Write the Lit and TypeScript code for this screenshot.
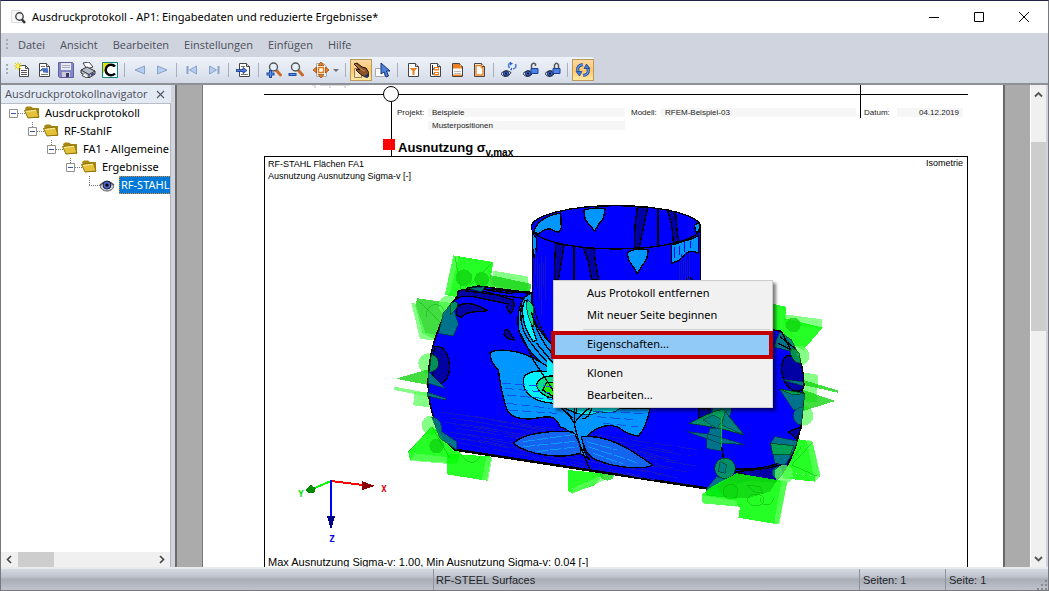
import { LitElement, html, svg, css, nothing } from "lit";
import type { TemplateResult, SVGTemplateResult } from "lit";
import { customElement, property, state } from "lit/decorators.js";
import { classMap } from "lit/directives/class-map.js";

const sheet = svg`<path d="M3.500 1.500h7l3 3v10h-10z" fill="#fff" stroke="#444"/><path d="M10.500 1.500v3h3" fill="#ddd" stroke="#444"/>`;
const eye = svg`<path d="M0 11.500Q4.500 6.500 10 10.500Q8 15 4 14.500Q1 14 0 11.500" fill="#dfe8fa" stroke="#234"/><circle cx="5" cy="11.500" r="2.600" fill="#3a66d8" stroke="#124"/><circle cx="5" cy="11.500" r="1" fill="#001"/>`;
const lens = svg`<path d="M10.500 8.500l4 4.500" stroke="#c86a2a" stroke-width="3" stroke-linecap="round"/><circle cx="7.500" cy="5" r="4" fill="#e4f0fc" stroke="#555" stroke-width="1.400"/>`;

const icons: Record<string, SVGTemplateResult> = {
  new: svg`<path d="M5.500 3.500h6l3 3v8h-9z" fill="#fff" stroke="#444"/><path d="M11.500 3.500v3h3M7 8.500h6M7 10.500h6M7 12.500h6" fill="none" stroke="#555"/><path d="M4 0v8M0 4h8M1 1l6 6M7 1l-6 6" stroke="#e3d200"/><circle cx="4" cy="4" r="1.500" fill="#fff36a"/>`,
  open: svg`${sheet}<path d="M5 4.500h4M5 12.500h7" stroke="#777"/><path d="M4 9Q6 5 10 7l1-1.500 1 5-5-.5 1.500-1.500Q6.500 8 4 9" fill="#4a7ae0" stroke="#1c3f94" stroke-width=".6"/>`,
  save: svg`<path d="M.5 .5h14l1 1v14H1.500l-1-1z" fill="#8486c8" stroke="#5e5f9c"/><path d="M3 1h10v7H3z" fill="#e9ebf2"/><path d="M4 3.500h8M4 5.500h8" stroke="#aab"/><path d="M4 10h8v5H4z" fill="#c9cad6"/><path d="M8 11h3v4H8z" fill="#3a3a70"/>`,
  print: svg`<path d="M3 1l6-1 4 5-6 2z" fill="#fff" stroke="#445"/><path d="M1 8l6-3 8 4v3l-6 4-8-5z" fill="#b9bfca" stroke="#333"/><path d="M1 8l8 4.500 6-3.500M9 12.500V16" fill="none" stroke="#333"/><path d="M4 11.500l-2 2 5 2.500 1-1.500" fill="#fff" stroke="#445"/><path d="M11 13l3-1.700" stroke="#33a" stroke-width="1.500"/>`,
  logo: svg`<path d="M.5 .5h15v15H.5z" fill="#fff" stroke="#088484"/><path d="M1 1h7L1 12z" fill="#eedc12"/><path d="M13 4.500A5.300 5.300 0 1 0 13 11.500" fill="none" stroke="#000" stroke-width="2.500"/>`,
  prev: svg`<path d="M12.500 4v8L3 8z" fill="#b5cdf2" stroke="#8aa1c9"/>`,
  next: svg`<path d="M3.500 4v8l9.500-4z" fill="#b5cdf2" stroke="#8aa1c9"/>`,
  first: svg`<path d="M3.500 4v8" stroke="#8aa1c9" stroke-width="2"/><path d="M12.500 4v8L5.500 8z" fill="#b5cdf2" stroke="#8aa1c9"/>`,
  last: svg`<path d="M12.500 4v8" stroke="#8aa1c9" stroke-width="2"/><path d="M3.500 4v8l7-4z" fill="#b5cdf2" stroke="#8aa1c9"/>`,
  goto: svg`${sheet}<path d="M5 4.500h4M5 12.500h7" stroke="#777"/><path d="M0 7.500h7V5.500l4 3-4 3v-2H0z" fill="#4a7ae0" stroke="#173a86" stroke-width=".8"/>`,
  zoomin: svg`${lens}<path d="M4.500 8v8M.5 12h8" stroke="#1c4a9e" stroke-width="3"/><path d="M4.500 9v6M1.500 12h6" stroke="#5f93ee"/>`,
  zoomout: svg`${lens}<path d="M.5 12.500h8" stroke="#1c4a9e" stroke-width="3"/><path d="M1.500 12.500h6" stroke="#5f93ee"/>`,
  fit: svg`<path d="M3.500 1.500h7l3 3v10h-10z" fill="#fff" stroke="#aaa"/><path d="M8 0l3 3.500H5zM8 16l3-3.500H5zM0 8l3.500-3v6zM16 8l-3.500-3v6z" fill="#f08020" stroke="#8a4208" stroke-width=".7"/><path d="M5.500 5.500h5v5h-5z" fill="#fff" stroke="#e57a1c" stroke-width="1.500"/>`,
  hand: svg`<path d="M1.500 6.500h7v9h-7z" fill="#f8e3b4" stroke="#98805a"/><path d="M1 2l3-1 5 4 4 1 3 5-1 4-5-1-4-3-3-3 1-1 3 1z" fill="#8b5428" stroke="#26150a"/><path d="M2 2l7 6 3 1" fill="none" stroke="#c58d55"/><path d="M11 15l4-4 1 3-2 2z" fill="#1f2f69"/>`,
  select: svg`<path d="M.5 6.500h9v8h-9z" fill="#fff" stroke="#aaa"/><path d="M6 1v11l3-2 2 5 2.500-1-2-5H15z" fill="#4d7fe0" stroke="#18366f"/>`,
  filter: svg`${sheet}<path d="M4.500 6h8L9.500 9v4h-2V9z" fill="#ee8222"/>`,
  tree: svg`${sheet}<path d="M5.500 3v9.500M5.500 7h2M5.500 12h2" stroke="#222"/><path d="M7 5h5v3.500H7zM7 10h5v3.500H7z" fill="#ee8222"/><path d="M8 6.500h3M8 11.500h3" stroke="#fff"/>`,
  head: svg`${sheet}<path d="M4 2h6l3 3v1.500H4z" fill="#ee8222"/><path d="M5 9.500h7M5 11.500h7" stroke="#bbb"/><path d="M4 12.500h9v1.500H4z" fill="#ee8222"/>`,
  frame: svg`${sheet}<path d="M5 3.500h5.500v2h1.500v7.500H5z" fill="#fff" stroke="#ee8222" stroke-width="1.400"/>`,
  eyesync: svg`${eye}<path d="M8.500 6Q6 2 10 .8M12 7Q16 6 14.500 2" fill="none" stroke="#4b7fd8" stroke-width="1.600"/><path d="M9 0l3 1.500-3 2zM11 8.500V5.500l-2 2" fill="#285fc0"/>`,
  eyeopen: svg`${eye}<path d="M8 6.500h7v5H8z" fill="#4d83e6" stroke="#1c3f94"/><path d="M8.500 6V3q1.500-3 4-1v2" fill="none" stroke="#555" stroke-width="1.500"/>`,
  eyelock: svg`${eye}<path d="M8 6.500h7v5H8z" fill="#4d83e6" stroke="#1c3f94"/><path d="M9.500 6V3q2-3.500 4 0v3" fill="none" stroke="#555" stroke-width="1.500"/>`,
  refresh: svg`<path d="M3.500 10.500Q1 4.500 6 3L8 2.700M12.500 5.500Q15 11.500 10 13L8 13.300" fill="none" stroke="#173f8c" stroke-width="3"/><path d="M3.500 10.500Q1 4.500 6 3L8 2.700M12.500 5.500Q15 11.500 10 13L8 13.300" fill="none" stroke="#5c97f0" stroke-width="1.500"/><path d="M1 9.500h6L4.500 14zM15 6.500H9L11.500 2z" fill="#3c78dc" stroke="#173f8c" stroke-width=".7"/>`,
};

type Tool = { icon: string; label: string; on?: boolean; menu?: boolean };
const groups: Tool[][] = [
  [
    { icon: "new", label: "Neu" },
    { icon: "open", label: "Öffnen" },
    { icon: "save", label: "Speichern" },
    { icon: "print", label: "Drucken" },
    { icon: "logo", label: "Sprache" },
  ],
  [{ icon: "prev", label: "Zurück" }, { icon: "next", label: "Vor" }],
  [{ icon: "first", label: "Erste Seite" }, { icon: "last", label: "Letzte Seite" }],
  [{ icon: "goto", label: "Gehe zu Seite" }],
  [
    { icon: "zoomin", label: "Vergrößern" },
    { icon: "zoomout", label: "Verkleinern" },
    { icon: "fit", label: "Anpassen", menu: true },
  ],
  [{ icon: "hand", label: "Verschieben", on: true }, { icon: "select", label: "Auswählen" }],
  [
    { icon: "filter", label: "Selektion" },
    { icon: "tree", label: "Gliederung" },
    { icon: "head", label: "Kopfzeile" },
    { icon: "frame", label: "Deckblatt" },
  ],
  [
    { icon: "eyesync", label: "Ansicht aktualisieren" },
    { icon: "eyeopen", label: "Ansicht entsperren" },
    { icon: "eyelock", label: "Ansicht sperren" },
  ],
  [{ icon: "refresh", label: "Aktualisieren", on: true }],
];

const glyph = (body: SVGTemplateResult, w = 16, h = 16) =>
  html`<svg width=${w} height=${h} viewBox="0 0 ${w} ${h}" aria-hidden="true">${body}</svg>`;

@customElement("tool-bar")
export class ToolBar extends LitElement {
  static styles = css`
    :host { display: flex; background: #d0d4de; }
    .strip { display: flex; align-items: center; height: 26px; padding-left: 3px; border-radius: 0 3px 3px 0; background: linear-gradient(#eef2f9, #e0e6f0 60%, #d3dae6); }
    .grip { width: 7px; }
    svg { display: block; }
    .sep { width: 1px; height: 14px; margin: 0 4px 0 3px; background: #a9afbb; }
    button { display: flex; align-items: center; justify-content: center; box-sizing: border-box; width: 22px; height: 22px; padding: 0; border: 1px solid transparent; background: none; }
    .on { border-color: #b99a5c; background: linear-gradient(#fbd9a2, #ffc86b 50%, #ffe9a0); }
    .wide { width: 35px; gap: 4px; padding-left: 2px; }
  `;
  render() {
    return html`<div class="strip" role="toolbar" aria-label="Werkzeuge">
      <svg class="grip" width="7" height="14"><path d="M3 1v12" stroke="#a4abb8" stroke-width="2" stroke-dasharray="2 2" /></svg>
      ${groups.map((g, i) => html`${i ? html`<span class="sep"></span>` : nothing}${g.map(
        (t) => html`<button aria-label=${t.label} class=${classMap({ on: !!t.on, wide: !!t.menu })}>
          ${glyph(icons[t.icon])}${t.menu ? glyph(svg`<path d="M0 0h6L3 3z" fill="#6c6f76"/>`, 6, 3) : nothing}
        </button>`
      )}`)}
    </div>`;
  }
}

type Node = { label: string; leaf?: boolean; children?: Node[] };
const tree: Node = {
  label: "Ausdruckprotokoll",
  children: [{ label: "RF-StahlF", children: [{ label: "FA1 - Allgemeine", children: [{ label: "Ergebnisse", children: [{ label: "RF-STAHL", leaf: true }] }] }] }],
};

@customElement("nav-tree")
export class NavTree extends LitElement {
  static styles = css`
    :host { display: flex; flex-direction: column; min-width: 0; font: 11px/18px "Open Sans", sans-serif; }
    header { display: flex; align-items: center; justify-content: space-between; height: 18px; padding: 0 6px 0 4px; background: #e4eaf4; color: #4b4e58; line-height: 16px; }
    h2 { margin: 0; font: inherit; white-space: nowrap; }
    button { display: flex; align-items: center; justify-content: center; padding: 0; border: 0; background: none; }
    .box { flex: 1; min-height: 0; display: flex; flex-direction: column; overflow: hidden; border-top: 1px solid #b9bdc6; border-right: 1px solid #b0b4bd; background: #fff; }
    .scroll { flex: 1; overflow: hidden; }
    ul { list-style: none; margin: 0; padding: 0 0 0 19px; }
    .root { padding: 0 0 0 6px; }
    .row { display: flex; height: 18px; white-space: nowrap; font-family: "Noto Sans", sans-serif; color: #000; }
    .row svg { flex: none; }
    .row span { padding: 0 2px; }
    .sel { background: #0078d7; color: #fff; outline: 1px dotted #e08a30; outline-offset: -1px; }
    .bar { display: grid; grid-template-columns: 17px 36px 1fr 17px; height: 15px; background: #f0f0f0; }
    .thumb { background: #cdcdcd; }
  `;
  private item(n: Node, depth = 0): TemplateResult {
    return html`<li>
      <div class="row">
        ${glyph(
          svg`${depth ? svg`<path d="M6.500 ${n.leaf ? 0 : -2}V${n.leaf ? 10 : 5}" stroke="#777" stroke-dasharray="1 1"/>` : nothing}
          <path d="M${n.leaf ? 6 : 11} 9.500H18" stroke="#777" stroke-dasharray="1 1"/>
          ${n.leaf
            ? svg`<ellipse cx="24" cy="10.500" rx="6.500" ry="4.500" fill="#cfd5e4" stroke="#555"/><path d="M17 9Q24 2 31 9" fill="none" stroke="#555" stroke-width="1.300"/><circle cx="24" cy="9" r="4" fill="#4b62c4" stroke="#223"/><circle cx="24" cy="9" r="1.600" fill="#000"/>`
            : svg`<path d="M2.500 5.500h8v8h-8z" fill="#fff" stroke="#919191"/><path d="M4 9.500h5" stroke="#3a55a8"/>
              <path d="M18 4l2-1.500h4l2 1.500h6v10H21z" fill="#a8870f"/><path d="M17.500 6.500l12-1.500 2.500 8-11 1z" fill="#e3c23a" stroke="#8f7412"/><path d="M19 7.500l10-1.200" stroke="#fbeb9a"/>`}`,
          36,
          18
        )}
        <span class=${classMap({ sel: !!n.leaf })}>${n.label}</span>
      </div>
      ${n.children ? html`<ul>${n.children.map((c) => this.item(c, depth + 1))}</ul>` : nothing}
    </li>`;
  }
  render() {
    return html`<header><h2>Ausdruckprotokollnavigator</h2>
        <button aria-label="Schließen">${glyph(svg`<path d="M1 1l7 7M8 1l-7 7" stroke="#555b66" stroke-width="1.200"/>`, 9, 9)}</button></header>
      <div class="box">
        <div class="scroll"><ul class="root">${this.item(tree)}</ul></div>
        <div class="bar">
          <button aria-label="Nach links">${glyph(svg`<path d="M6 1L2.500 4.500 6 8" fill="none" stroke="#444" stroke-width="1.600"/>`, 9, 9)}</button>
          <span class="thumb"></span><span></span>
          <button aria-label="Nach rechts">${glyph(svg`<path d="M3 1l3.500 3.500L3 8" fill="none" stroke="#444" stroke-width="1.600"/>`, 9, 9)}</button>
        </div>
      </div>`;
  }
}

@customElement("result-model")
export class ResultModel extends LitElement {
  static styles = css`
    :host { display: block; overflow: hidden; }
    svg { display: block; width: 100%; min-width: 702px; }
    .k { stroke: #000; stroke-width: 4; stroke-linejoin: round; }
    .t { stroke: #000; stroke-width: 2; }
    .n { fill: none; }
    .l { fill: #0096ff; } .d { fill: #0000a5; } .c { fill: #00f4ff; } .e { fill: #00e08c; }
    .g { fill: #00ff00; fill-opacity: 0.85; }
    .p { fill: #5cff5c; fill-opacity: 0.75; }
    .m { fill: #12d512; fill-opacity: 0.8; }
    .q { fill: #008080; fill-opacity: 0.9; stroke: #003838; stroke-width: 2; }
    .f { fill: #00a850; fill-opacity: 0.85; stroke: #003800; stroke-width: 2; }
    .o { fill: none; stroke: #00a000; stroke-width: 2; stroke-opacity: 0.6; }
    .ax { font: bold 9px "DejaVu Sans Mono", monospace; text-anchor: middle; }
  `;
  render() {
    const streaks = Array.from({ length: 16 }, (_, i) => svg`<path d="M${440 + (i * 17) % 40} ${412 + i * 2}L${700 - (i * 23) % 60} ${450 + i * 2}" stroke="#1414cc" stroke-dasharray="${20 + (i * 7) % 30} ${4 + i % 5}"/>`);
    const wall = Array.from({ length: 12 }, (_, i) => svg`<path d="M${535 + i * 2 + (i > 5 ? 132 : 0)} ${250 + (i * 7) % 15}V${275 + (i * 13) % 40}" stroke="#1414cc"/>`);
    return html`<svg viewBox="265 157 702 410" shape-rendering="crispEdges" role="img" aria-label="Ausnutzung der Flächen">
      <g transform="translate(390 240) scale(.33333)">
        <path class="g" d="M190 46L310 66L290 190L165 165Z"/><path class="p" d="M190 46L206 50L180 160L164 165Z"/><path class="o" d="M195 50L215 160L305 70"/>
        <circle class="m" cx="222" cy="113" r="25"/><circle class="m" cx="275" cy="118" r="22"/>
        <path class="p" d="M310 92L415 110L412 156L305 135Z"/><path class="m" d="M300 105L424 132L420 158L300 140Z"/>
        <path class="m" d="M82 175L205 192L185 240L138 300L98 280L76 198Z"/><path class="p" d="M64 190L76 190L106 278L136 285V302L90 296Z"/><circle class="p" cx="175" cy="196" r="29"/>
        <path class="o" d="M80 178L150 245M150 250a28 30 0 1 0-40-20"/>
        <circle class="p" cx="115" cy="370" r="30"/><path class="m" d="M18 416L115 388L165 445Z"/><path class="p" d="M12 440L165 468L170 480L12 450Z"/><path class="p" d="M72 455H120V502L70 496Z"/>
        <circle class="p" cx="124" cy="556" r="29"/><path class="g" d="M55 635L125 560L215 625L200 670L60 660Z"/><path class="p" d="M75 640L200 655L200 674L60 662Z"/>
        <path class="g" d="M170 640L305 650L290 722L170 703Z"/><path class="p" d="M290 650L306 655L294 722L276 720Z"/><circle class="m" cx="140" cy="618" r="22"/><path class="o" d="M55 635L125 560L180 655M205 630q40 70 70 10"/>
        <path class="g" d="M533 690L640 700L615 735L545 760L533 750Z"/><path class="p" d="M545 745L640 705L645 720L545 762Z"/><circle class="m" cx="652" cy="700" r="22"/>
      </g>
      <g transform="translate(670 285) scale(.33333)">
        <path class="g" d="M300 55L348 65L345 190H300Z"/><path class="p" d="M345 88L455 103L458 130L345 118Z"/><path class="g" d="M345 100L458 128L400 195L345 170Z"/>
        <circle class="m" cx="370" cy="120" r="22"/><circle class="p" cx="388" cy="212" r="30"/><circle class="p" cx="400" cy="392" r="30"/>
        <path class="p" d="M400 262L445 270L440 350H400Z"/><path class="m" d="M400 315L496 348L400 378Z"/><path class="m" d="M400 285L503 316V323L400 300Z"/>
        <path class="g" d="M340 455L428 470L450 575L340 560Z"/><path class="p" d="M410 463L428 470L452 574L436 590L430 570Z"/><path class="g" d="M340 560L436 574V590L340 580Z"/>
        <path class="o" d="M425 475L365 540L440 573M360 530l35-45"/>
      </g>
      <path d="M468 288L478 286L532 293L780 331C796 345 803 370 803 400C803 432 792 466 775 482L750 480L711 489L455 450C438 438 428 410 428 382C429 340 447 300 468 288Z" fill="#00f" stroke="#000" stroke-width="1.500"/>
      <path d="M457 450L711 489" stroke="#000" stroke-width="2.500"/>
      ${streaks}
      <path d="M532 228V300Q540 335 556 349H700V228Z" fill="#00f"/>
      <path d="M532 228V300Q540 335 556 349M700 228V300" fill="none" stroke="#000"/>
      <g transform="translate(390 240) scale(.33333)">
        <path class="d k" d="M205 152C260 140 300 160 370 180Q378 205 360 220Q345 200 355 192L250 170Q210 165 200 178Z"/>
        <path class="d k" d="M200 200C230 180 265 195 292 212C265 218 230 210 215 232L200 225Z"/>
        <path class="d k" d="M135 320C165 315 180 350 178 390C175 425 150 440 135 425Q118 390 135 320Z"/>
        <path class="d k" d="M345 270Q355 265 360 280L373 300Q355 300 342 285Z"/>
        <path class="k n" d="M225 152L410 176M235 144L420 156M300 142L320 150L420 160M290 150l70 10 20-4"/>
        <path class="l k" d="M424 160C395 165 378 215 386 270C400 320 450 370 490 400V318C455 285 432 250 424 215Z"/>
        <path class="c k" d="M405 180C390 210 398 260 430 305L440 300C425 260 415 230 412 185Z"/>
        <path class="e t" d="M412 178C405 215 420 250 432 262V200Z"/>
        <path class="k n" d="M395 190Q385 250 410 290T490 385M424 215Q440 290 490 345M440 310L490 370"/>
        <path class="l k" d="M300 338C320 325 370 330 410 345C445 360 475 380 500 400H600V500L680 504L780 505Q770 560 745 588Q720 585 700 572C680 555 640 545 598 582C570 610 580 640 600 660L570 640C560 600 545 570 510 560C495 520 470 530 430 536C390 540 360 530 352 510C335 470 330 420 325 390Q300 365 300 338Z"/>
        <path class="c k" d="M492 398C455 390 410 390 400 415C395 460 430 485 490 490L560 520V400Z"/><path class="c" d="M470 355L492 375V430L472 400Z"/>
        <path class="e k" d="M492 408Q450 405 438 435Q450 470 492 475Z"/><path d="M492 428H470L458 450L490 470Z" fill="#1bf000" class="k"/>
        <path class="k n" d="M392 280L430 360L492 455"/><path class="c t" d="M560 500L690 504Q670 525 630 515Q600 530 560 520Z"/>
        <path class="k n" d="M500 490C520 510 540 525 553 550C565 530 590 510 610 495M553 500V550C560 590 570 620 600 690M515 505l35 30M575 535q20 5 30-30"/>
        <path class="k" fill="#1464f0" d="M370 610C400 580 480 570 548 576Q572 600 572 640C520 655 420 650 370 610Z"/>
        <path class="k" fill="#1464f0" d="M574 590C630 585 680 605 720 630Q760 655 788 675C760 690 680 685 620 660C590 650 580 620 574 590Z"/>
        <path class="n" stroke="#0a9cff" stroke-width="3" stroke-dasharray="34 7" d="M400 605L560 582M400 620L565 603M440 635L565 620M590 605L680 630M595 620L740 668M610 640L700 672"/>
        <path class="n" stroke="#1550f0" stroke-width="3" stroke-dasharray="28 13" d="M335 430L500 440M345 445L480 458M350 465L510 480M352 490L480 505M355 510L500 520M610 515L760 520M620 530L745 540M640 550L745 560"/>
        <path class="q" d="M160 218L185 190L205 252L190 288L146 280Z"/><path class="f" d="M182 190Q210 175 200 205L180 225Z"/><path class="q" d="M235 145L285 140L275 155Z"/>
        <path class="f" d="M124 342Q150 350 144 380Q135 395 118 398Z"/><path class="q" d="M115 395L165 445L115 430ZM112 457L168 475V480L112 468Z"/><path class="q" d="M125 530Q160 540 155 575L200 605V630L150 595Z"/>
      </g>
      <g transform="translate(520 195) scale(.33333)">
        <ellipse class="k" fill="#00f" cx="288" cy="97" rx="254" ry="65"/>
        <path class="l k" d="M42 110C50 80 75 62 122 54L124 100C115 122 105 105 90 102C70 100 62 112 55 118Z"/>
        <path class="l k" d="M192 45Q225 35 255 42Q252 75 238 85L224 108L205 85Q192 75 192 45Z"/>
        <path class="d k" d="M352 36L383 38L372 90L358 157L343 157L345 90ZM442 44L467 52L470 95L476 140L460 142L455 90Z"/>
        <path class="k n" d="M414 40V152M162 152V256"/>
        <path class="l k" d="M523 92L536 80L540 100L530 115ZM38 115L50 130L48 170L43 188L38 160Z"/>
        <path class="d k" d="M107 146L133 148L125 195L115 255H103L104 200ZM190 158L222 160L226 200L236 255H215L205 200Z"/>
        <path class="l k" d="M322 172Q350 158 384 164Q385 190 366 212L352 236L340 215Q322 195 322 172Z"/>
        <path class="l k" d="M455 150L520 130L536 120V175C520 165 500 165 480 195L455 205Z"/>
        <path d="M465 155V190M480 152V180M495 142V170M512 138V160" stroke="#00f" stroke-width="3"/>
        <path class="k n" d="M497 254q10-12 20 0"/>
      </g>
      ${wall}
      <g transform="translate(670 285) scale(.33333)">
        <path class="q" d="M330 140L365 165L385 205L330 190L312 188L320 160Z"/><path class="k n" d="M335 142L400 265M330 155L375 190M325 175L385 205"/>
        <path class="d k" d="M350 212C330 225 330 270 350 300C370 325 400 325 402 300Q400 240 385 215Z"/>
        <path class="f" d="M360 195Q375 185 388 205L392 235Q365 235 360 195Z"/>
        <path class="q" d="M328 312L405 325L398 372L370 375ZM332 283L400 290V303Z"/><path class="f" d="M328 312L370 330L405 325Z"/>
        <path class="q" d="M400 365Q370 370 370 392Q370 415 394 420Z"/>
        <path class="d k" d="M355 440L395 425L380 462Z"/><path class="q" d="M302 475L315 455L382 468L370 500L345 540L315 535Z"/><path class="f" d="M302 475L372 482L360 510L308 508Z"/>
        <path class="d k" d="M85 370L120 372L118 400L85 398Z"/><circle class="q" cx="155" cy="375" r="29"/>
        <path class="f" d="M58 415L130 380L160 372L222 450L150 430Z"/><path class="q" d="M100 405L130 390L160 405L140 430ZM165 380L222 450L155 420Z"/>
        <path class="q" d="M52 440L120 448L222 478L150 475ZM110 465L120 430H155V498L110 490Z"/><path class="m" d="M152 400h4v95h-4z"/>
        <path class="k n" d="M155 485L165 550M195 552C250 555 300 545 325 535"/>
        <path class="d k" d="M195 560L240 556L290 550L330 540L340 545L320 588L240 575Z"/><circle class="q" cx="322" cy="563" r="16"/><circle class="p" cx="342" cy="568" r="28"/>
        <path class="q" d="M110 610L140 575L200 590V640L110 630Z"/><circle class="f" cx="165" cy="550" r="31"/><path class="q" d="M150 530l20 10-5 25-20-5z"/>
        <path class="g" d="M95 630L125 605L200 565L352 590L325 718L205 698L210 665L98 655Z"/><path class="p" d="M95 630L200 648V665L98 655ZM335 585L352 590L328 718L312 716Z"/>
        <path class="m" d="M140 605L200 565L320 588L300 620L230 640L160 635Z"/>
        <path class="o" d="M160 620a22 22 0 1 0 44 0a22 22 0 1 0-44 0M232 645a25 18 0 1 0 50 0a25 18 0 1 0-50 0M230 600l40 5 10 20-30-5zM270 640a20 20 0 1 0 40 0"/>
      </g>
      <path d="M331 481L310 490" stroke="#0f0" stroke-width="2"/><path d="M331 481L363 485" stroke="red" stroke-width="2"/><path d="M331 480V517" stroke="#00f" stroke-width="2"/>
      <path d="M305 490L311 485L316 488L314 493L308 493Z" fill="#008a00"/><path d="M362 481L375 486L362 490Z" fill="#8a0000"/><path d="M327 516H335L331 530Z" fill="#00008a"/>
      <text class="ax" x="301" y="497" fill="#00e000">Y</text><text class="ax" x="384" y="492" fill="#e00000">X</text><text class="ax" x="332" y="542" fill="#0000e0">Z</text>
    </svg>`;
  }
}

@customElement("report-page")
export class ReportPage extends LitElement {
  static styles = css`
    :host { display: flex; flex-direction: column; overflow: hidden; box-sizing: border-box; padding: 0 35px 0 61px; background: #fff; color: #000; font: 9px/12px "Liberation Sans", sans-serif; }
    .rule { height: 9px; border-bottom: 1px solid #000; padding-left: 48px; }
    .rule svg { display: block; }
    .head { position: relative; height: 61px; margin-left: 127px; border-left: 1px solid #000; }
    .dot, .mark { position: absolute; box-sizing: border-box; }
    .dot { left: -9px; top: -9px; width: 16px; height: 16px; border: 1px solid #000; border-radius: 50%; background: #fff; }
    .mark { left: -9px; top: 44px; width: 12px; height: 11px; background: #f00; }
    dl { display: grid; grid-template-columns: 31px 197px 6px 30px minmax(0, 1fr) 8px 33px 66px; row-gap: 4px; margin: 0; padding: 13px 5px 0; font-size: 8px; line-height: 9px; color: #222; }
    dt, dd { margin: 0; }
    dd { padding: 0 4px; background: #f6f6f6; }
    .m { grid-column: 4; } .date { grid-column: 7; } .r { text-align: right; } .second { grid-column: 2; }
    .bar { position: absolute; right: 107px; top: -10px; width: 1px; height: 33px; background: #000; }
    h1 { margin: 9px 0 0 6px; font-size: 13px; line-height: 17px; font-weight: bold; }
    sub { font-size: 10px; line-height: 1px; vertical-align: -4px; }
    .frame { flex: 1; min-height: 0; display: grid; grid-template: minmax(0, 1fr) / minmax(0, 1fr) auto; border: 1px solid #000; border-bottom: 0; }
    result-model { grid-area: 1 / 1 / 2 / 3; }
    p { margin: 0; }
    .cap { grid-area: 1 / 1; padding: 1px 3px; z-index: 1; }
    .view { grid-area: 1 / 2; padding: 0 4px; z-index: 1; }
    .foot { grid-area: 1 / 1; align-self: end; padding: 0 3px; font-size: 11px; line-height: 10px; z-index: 1; }
  `;
  render() {
    return html`<div class="rule"><svg width="48" height="6"><path d="M-4 0h8M8 0h30M2 2h2M17 2h2M32 2h2" stroke="#bbb" /></svg></div>
      <div class="head">
        <span class="dot"></span><span class="bar"></span>
        <dl>
          <dt>Projekt:</dt><dd>Beispiele</dd>
          <dt class="m">Modell:</dt><dd>RFEM-Beispiel-03</dd>
          <dt class="date">Datum:</dt><dd class="r">04.12.2019</dd>
          <dd class="second">Musterpositionen</dd>
        </dl>
        <span class="mark"></span>
        <h1>Ausnutzung σ<sub>v,max</sub></h1>
      </div>
      <div class="frame">
        <result-model></result-model>
        <div class="cap"><p>RF-STAHL Flächen FA1</p><p>Ausnutzung Ausnutzung Sigma-v [-]</p></div>
        <p class="view">Isometrie</p>
        <p class="foot">Max Ausnutzung Sigma-v: 1.00, Min Ausnutzung Sigma-v: 0.04 [-]</p>
      </div>`;
  }
}

@customElement("context-menu")
export class ContextMenu extends LitElement {
  @property({ attribute: false }) groups: string[][] = [];
  @property() active = "";
  static styles = css`
    :host { display: block; box-sizing: border-box; border: 1px solid #ccc; padding: 1px; background: #f1f1f1; box-shadow: 3px 3px 3px rgba(0, 0, 0, 0.5); font: 11px/22px "Noto Sans", sans-serif; }
    button { position: relative; display: block; width: 100%; height: 22px; padding: 0 0 0 32px; border: 0; background: none; text-align: left; font: inherit; color: #000; }
    .on { background: #91c9f7; }
    .on::after { content: ""; position: absolute; inset: -2px -2px -4px -4px; border: 4px solid #c00000; }
    hr { height: 1px; margin: 3px 1px 3px 28px; border: 0; background: #d0d0d0; }
  `;
  render() {
    return html`${this.groups.map((g, i) => html`${i ? html`<hr />` : nothing}${g.map(
      (l) => html`<button role="menuitem" class=${classMap({ on: l === this.active })}>${l}</button>`
    )}`)}`;
  }
}

@customElement("app-root")
export class AppRoot extends LitElement {
  @state() private menu = [["Aus Protokoll entfernen", "Mit neuer Seite beginnen"], ["Eigenschaften..."], ["Klonen", "Bearbeiten..."]];
  static styles = css`
    :host { position: relative; display: flex; flex-direction: column; box-sizing: border-box; height: 100vh; overflow: hidden; border: 1px solid #77797e; border-top-color: #23234a; background: #d0d4de; font-family: "Open Sans", sans-serif; }
    button { display: flex; align-items: center; justify-content: center; padding: 0; border: 0; background: none; font: inherit; color: inherit; }
    svg { display: block; }
    .title { display: flex; align-items: center; height: 32px; padding: 0 2px 0 10px; background: #fff; }
    h1 { flex: 1; margin: 0 0 0 5px; font: 11px/16px "Noto Sans", sans-serif; }
    .title button { width: 45px; height: 32px; }
    .menus { display: flex; align-items: center; gap: 15px; height: 24px; padding-left: 3px; font-size: 11px; line-height: 14px; color: #4b505b; }
    .menus button { padding-bottom: 1px; }
    .grip { margin-right: -8px; }
    .main { flex: 1; min-height: 0; display: grid; grid-template-columns: 170px minmax(0, 1fr) 18px; border-top: 2px solid #8d9097; }
    .view { display: flex; margin-left: 4px; padding: 0 25px; border-left: 2px solid #6b6b6b; background: #ababab; overflow: hidden; }
    report-page { flex: 1; min-width: 0; border-left: 1px solid #777; border-right: 2px solid #696969; }
    .scroll { display: grid; grid-template-rows: 18px 39px minmax(0, 189fr) minmax(0, 218fr) 18px; margin-right: 2px; border-left: 1px solid #fff; background: #f0f0f0; }
    .thumb { background: #cdcdcd; }
    .status { display: grid; grid-template-columns: 432px minmax(0, 1fr) 86px 103px; align-items: stretch; height: 21px; border-top: 2px solid #e8eaee; background: linear-gradient(#d5d9e1, #c0c4cc 35%, #a9adb6 50%, #bfc3cb); font: 11px/22px "Liberation Sans", sans-serif; color: #23252b; }
    .status span + span { border-left: 1px solid #8f939c; padding-left: 3px; }
    .status .name { padding-left: 2px; }
    .status .last { display: flex; justify-content: space-between; align-items: flex-end; }
  
    context-menu { position: absolute; left: 552px; top: 279px; width: 220px; }
  `;
  render() {
    return html`
      <div class="title">
        ${glyph(svg`<path d="M.5 1.500h8l3 3v9H.5z" fill="#f6f6f6" stroke="#ddd"/><path d="M10.500 10l3.500 4" stroke="#333" stroke-width="2.500"/><circle cx="8.500" cy="7.500" r="3.700" fill="#f3f6f9" stroke="#444" stroke-width="1.400"/>`)}
        <h1>Ausdruckprotokoll - AP1: Eingabedaten und reduzierte Ergebnisse*</h1>
        <button aria-label="Minimieren">${glyph(svg`<path d="M0 5.500h10" stroke="#000"/>`, 10, 10)}</button>
        <button aria-label="Maximieren">${glyph(svg`<path d="M.5 .5h9v9h-9z" fill="none" stroke="#000"/>`, 10, 10)}</button>
        <button aria-label="Fenster schließen">${glyph(svg`<path d="M0 0l10 10M10 0L0 10" stroke="#000"/>`, 10, 10)}</button>
      </div>
      <nav class="menus">
        <svg class="grip" width="7" height="14"><path d="M3 1v12" stroke="#a4abb8" stroke-width="2" stroke-dasharray="2 2" /></svg>
        ${["Datei", "Ansicht", "Bearbeiten", "Einstellungen", "Einfügen", "Hilfe"].map((m) => html`<button>${m}</button>`)}
      </nav>
      <tool-bar></tool-bar>
      <div class="main">
        <nav-tree></nav-tree>
        <div class="view"><report-page></report-page></div>
        <div class="scroll">
          <button aria-label="Nach oben">${glyph(svg`<path d="M1 6.500L4.500 3 8 6.500" fill="none" stroke="#555" stroke-width="1.800"/>`, 9, 9)}</button>
          <span></span><span class="thumb"></span><span></span>
          <button aria-label="Nach unten">${glyph(svg`<path d="M1 3l3.500 3.500L8 3" fill="none" stroke="#555" stroke-width="1.800"/>`, 9, 9)}</button>
        </div>
      </div>
      <div class="status">
        <span></span><span class="name">RF-STEEL Surfaces</span><span>Seiten: 1</span>
        <span class="last">Seite: 1 ${glyph(svg`<path d="M8 1h2v2H8zM4 5h2v2H4zM8 5h2v2H8zM0 9h2v2H0zM4 9h2v2H4zM8 9h2v2H8z" fill="#858a94"/>`, 11, 12)}</span>
      </div>
      <context-menu .groups=${this.menu} .active=${"Eigenschaften..."}></context-menu>
    `;
  }
}
